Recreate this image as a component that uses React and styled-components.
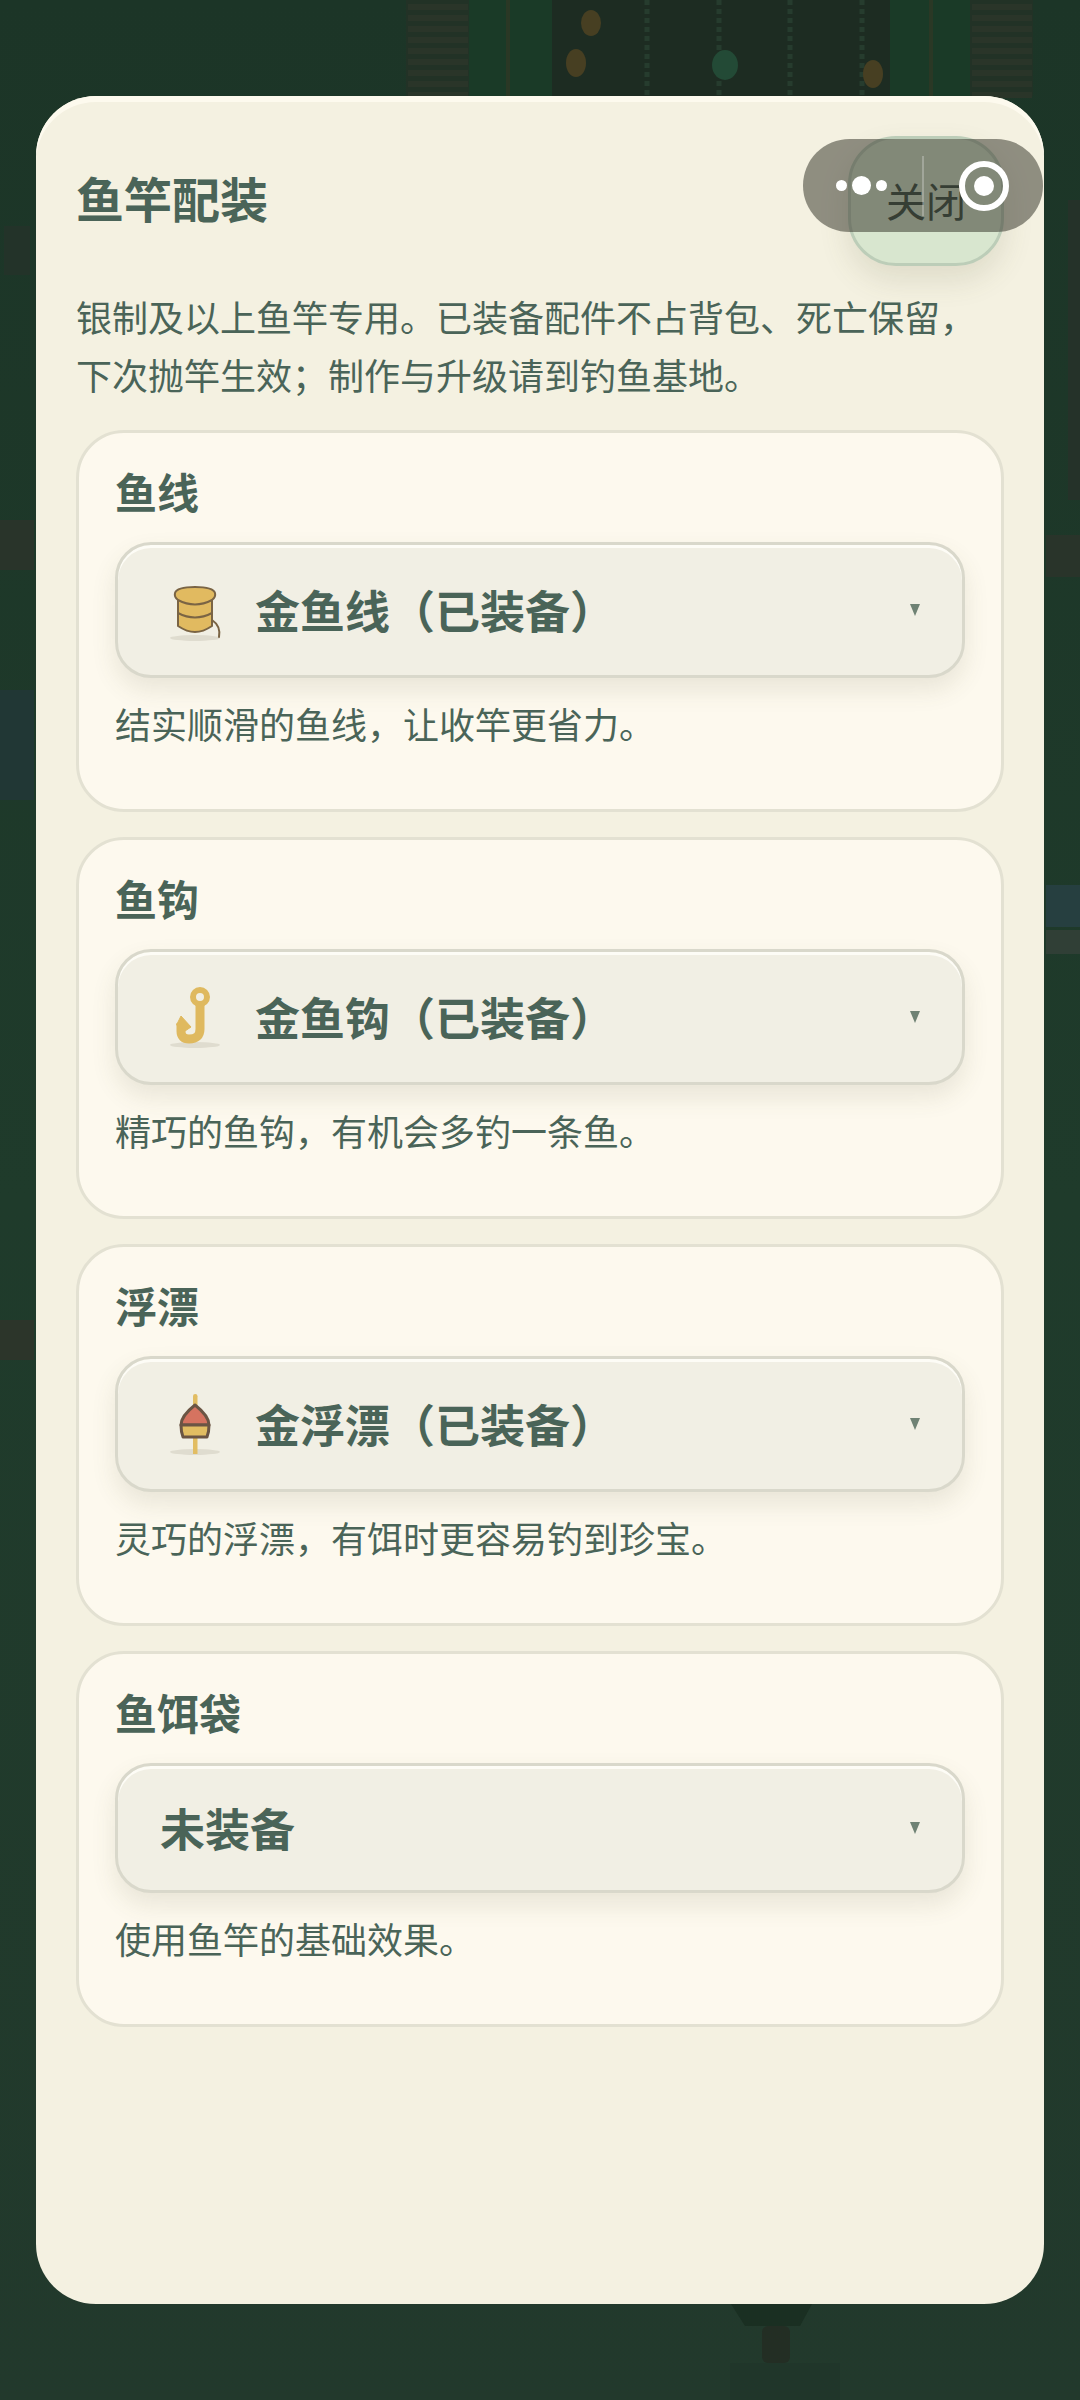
import React from "react";
import styled, { createGlobalStyle } from "styled-components";

const GlobalStyle = createGlobalStyle`
  html, body {
    margin: 0;
    padding: 0;
    background: #20382a;
  }
  * {
    box-sizing: border-box;
  }
`;

const Page = styled.div`
  position: relative;
  width: 1080px;
  height: 2400px;
  padding: 96px 36px;
  overflow: hidden;
  background: linear-gradient(#1c3527, #1f3b2b 50%, #22392c);
  font-family: "Noto Sans CJK SC", "Noto Sans", sans-serif;
  color: #4a6458;
`;

const Scenery = styled.svg`
  position: absolute;
  left: 0;
  top: 0;
`;

const Panel = styled.div`
  position: relative;
  display: flex;
  flex-direction: column;
  height: 2208px;
  padding: 0 40px;
  border-radius: 60px;
  background: #f4f1e1;
  box-shadow: inset 0 6px 0 #fdfaee;
`;

const Header = styled.div`
  display: flex;
  align-items: flex-start;
  justify-content: space-between;
  height: 191px;
  padding-top: 40px;
`;

const Title = styled.h1`
  margin: 30px 0 0;
  font-size: 48px;
  line-height: 62px;
  font-weight: 700;
`;

const CloseButton = styled.button`
  width: 156px;
  height: 130px;
  padding: 0 0 2px;
  border: 3px solid #bccdb8;
  border-radius: 48px;
  background: #d8e6cf;
  color: #2f4238;
  font-family: inherit;
  font-size: 40px;
  box-shadow: 0 14px 30px rgba(90, 90, 60, 0.14);
`;

const Intro = styled.p`
  margin: 0 0 27px;
  font-size: 36px;
  line-height: 58px;
`;

const Cards = styled.div`
  display: flex;
  flex-direction: column;
  gap: 25px;
`;

const Card = styled.section`
  padding: 31px 36px 0;
  height: ${({ $height }) => $height}px;
  border: 3px solid #e3e1d2;
  border-radius: 48px;
  background: #fdf9ee;
`;

const CardHeading = styled.h2`
  margin: 0 0 24px;
  font-size: 42px;
  line-height: 54px;
  font-weight: 700;
`;

const Select = styled.div`
  display: flex;
  align-items: center;
  height: ${({ $height }) => $height}px;
  padding: 0 42px;
  border: 3px solid #d9d8cb;
  border-radius: 36px;
  background: #f1efe4;
  box-shadow: inset 0 3px 0 #fdfcf6, 0 12px 24px rgba(90, 90, 60, 0.12);
`;

const ItemIcon = styled.svg`
  flex: none;
  width: 60px;
  height: 60px;
  margin: 0 30px 0 5px;
  overflow: visible;
`;

const SelectLabel = styled.span`
  flex: 1;
  font-size: 45px;
  font-weight: 700;
  line-height: 60px;
`;

const Caret = styled.span`
  width: 0;
  height: 0;
  border-left: 5.5px solid transparent;
  border-right: 5.5px solid transparent;
  border-top: 12px solid #6f8274;
`;

const Description = styled.p`
  margin: 18px 0 0;
  font-size: 36px;
  line-height: 54px;
`;

const Capsule = styled.div`
  position: absolute;
  left: 803px;
  top: 139px;
  display: flex;
  align-items: center;
  width: 240px;
  height: 93px;
  border-radius: 47px;
  background: rgba(60, 60, 50, 0.55);
`;

const Dots = styled.div`
  display: flex;
  align-items: center;
  justify-content: center;
  gap: 5px;
  width: 116px;
`;

const Dot = styled.span`
  width: ${({ $big }) => ($big ? 19 : 11)}px;
  height: ${({ $big }) => ($big ? 19 : 11)}px;
  border-radius: 50%;
  background: #fff;
`;

const CapsuleLine = styled.span`
  width: 2px;
  height: 60px;
  margin: 0 0 0 3px;
  background: rgba(255, 255, 255, 0.25);
`;

const Target = styled.div`
  display: flex;
  align-items: center;
  justify-content: center;
  width: 50px;
  height: 50px;
  margin-left: 35px;
  border: 6px solid #fff;
  border-radius: 50%;
`;

const TargetDot = styled.span`
  width: 20px;
  height: 20px;
  border-radius: 50%;
  background: #fff;
`;

const Shadow = () => <ellipse cx="30" cy="58" rx="25" ry="3" fill="#dfdccf" />;

const LineIcon = () => (
  <ItemIcon viewBox="0 0 60 60">
    <Shadow />
    <path d="M13 20 Q9 17 10 13 Q12 7 30 7 Q48 7 50 13 Q51 17 47 20 L47 46 Q38 52 30 52 Q22 52 13 46Z" fill="#e1ba60" stroke="#7a6444" strokeWidth="2" strokeLinejoin="round" />
    <path d="M13 20 Q30 29 47 20 M13 33 Q30 42 47 33" fill="none" stroke="#7a6444" strokeWidth="2" />
    <path d="M47 40 Q56 46 54 57" fill="none" stroke="#7a6444" strokeWidth="2" strokeLinecap="round" />
  </ItemIcon>
);

const HookIcon = () => (
  <ItemIcon viewBox="0 0 60 60">
    <Shadow />
    <circle cx="35" cy="10" r="7" fill="none" stroke="#dfb95f" strokeWidth="6" />
    <path d="M35 16 L35 42 Q35 52 24 52 Q16 52 16 44 L16 36" fill="none" stroke="#dfb95f" strokeWidth="9" />
    <path d="M11.5 38 L16 29 L26 40 L20 44Z" fill="#dfb95f" stroke="#dfb95f" strokeWidth="1" strokeLinejoin="round" />
  </ItemIcon>
);

const FloatIcon = () => (
  <ItemIcon viewBox="0 0 60 60">
    <Shadow />
    <rect x="28" y="0" width="4.5" height="18" rx="2.2" fill="#e2bd62" />
    <rect x="28" y="40" width="4.5" height="20" fill="#e2bd62" />
    <path d="M30 11 Q44 22 44 31 L16 31 Q16 22 30 11Z" fill="#d57360" stroke="#6b5544" strokeWidth="3" strokeLinejoin="round" />
    <path d="M16 31 L44 31 Q44 38 42 43 L18 43 Q16 38 16 31Z" fill="#e2bd62" stroke="#6b5544" strokeWidth="3" strokeLinejoin="round" />
  </ItemIcon>
);

const slots = [
  { name: "鱼线", value: "金鱼线（已装备）", desc: "结实顺滑的鱼线，让收竿更省力。", Icon: LineIcon, height: 382, selectHeight: 136 },
  { name: "鱼钩", value: "金鱼钩（已装备）", desc: "精巧的鱼钩，有机会多钓一条鱼。", Icon: HookIcon, height: 382, selectHeight: 136 },
  { name: "浮漂", value: "金浮漂（已装备）", desc: "灵巧的浮漂，有饵时更容易钓到珍宝。", Icon: FloatIcon, height: 382, selectHeight: 136 },
  { name: "鱼饵袋", value: "未装备", desc: "使用鱼竿的基础效果。", height: 376, selectHeight: 130 },
];

const shutterRows = Array.from({ length: 9 }, (_, i) => 4 + i * 11);
const vines = [647, 719, 790, 862];

// the dimmed game scene behind the panel, only its edges show
const Background = () => (
  <Scenery width="1080" height="2400" viewBox="0 0 1080 2400">
    <rect x="552" y="0" width="338" height="96" fill="#1d2c22" />
    <rect x="469" y="0" width="83" height="96" fill="#1a3a27" />
    <rect x="890" y="0" width="80" height="96" fill="#1a3a27" />
    <rect x="506" y="0" width="4" height="96" fill="#2a3825" />
    <rect x="929" y="0" width="4" height="96" fill="#2a3825" />
    <rect x="406" y="0" width="63" height="96" fill="#223226" />
    <rect x="970" y="0" width="63" height="96" fill="#223226" />
    {shutterRows.map((y) => (
      <g key={y} fill="#2a3529">
        <rect x="408" y={y} width="60" height="6" />
        <rect x="972" y={y} width="60" height="6" />
      </g>
    ))}
    {vines.map((x) => (
      <line key={x} x1={x} y1="0" x2={x} y2="96" stroke="#263c2e" strokeWidth="5" strokeDasharray="5 4" />
    ))}
    <ellipse cx="591" cy="23" rx="10" ry="13" fill="#473f22" />
    <ellipse cx="576" cy="63" rx="10" ry="14" fill="#473f22" />
    <ellipse cx="725" cy="65" rx="13" ry="15" fill="#234a36" />
    <ellipse cx="873" cy="74" rx="10" ry="14" fill="#473f22" />
    <rect x="4" y="226" width="26" height="49" fill="#233329" />
    <rect x="0" y="520" width="34" height="50" fill="#29342a" />
    <rect x="0" y="690" width="34" height="110" fill="#213735" />
    <rect x="0" y="1320" width="34" height="40" fill="#2c352a" />
    <rect x="1068" y="200" width="12" height="300" fill="#253229" />
    <rect x="1046" y="535" width="34" height="42" fill="#29342a" />
    <rect x="1046" y="885" width="34" height="42" fill="#263f40" />
    <rect x="1046" y="930" width="34" height="24" fill="#303f36" />
    <path d="M731 2304 L812 2304 L800 2326 L745 2326Z" fill="#1a2f22" />
    <rect x="762" y="2326" width="28" height="37" rx="6" fill="#232e24" />
    <rect x="730" y="2363" width="110" height="37" fill="#20362a" />
  </Scenery>
);

export default function App() {
  return (
    <Page>
      <GlobalStyle />
      <Background />
      <Panel>
        <Header>
          <Title>鱼竿配装</Title>
          <CloseButton>关闭</CloseButton>
        </Header>
        <Intro>银制及以上鱼竿专用。已装备配件不占背包、死亡保留，下次抛竿生效；制作与升级请到钓鱼基地。</Intro>
        <Cards>
          {slots.map(({ name, value, desc, Icon, height, selectHeight }) => (
            <Card key={name} $height={height}>
              <CardHeading>{name}</CardHeading>
              <Select $height={selectHeight}>
                {Icon && <Icon />}
                <SelectLabel>{value}</SelectLabel>
                <Caret />
              </Select>
              <Description>{desc}</Description>
            </Card>
          ))}
        </Cards>
      </Panel>
      <Capsule>
        <Dots>
          <Dot />
          <Dot $big />
          <Dot />
        </Dots>
        <CapsuleLine />
        <Target>
          <TargetDot />
        </Target>
      </Capsule>
    </Page>
  );
}
